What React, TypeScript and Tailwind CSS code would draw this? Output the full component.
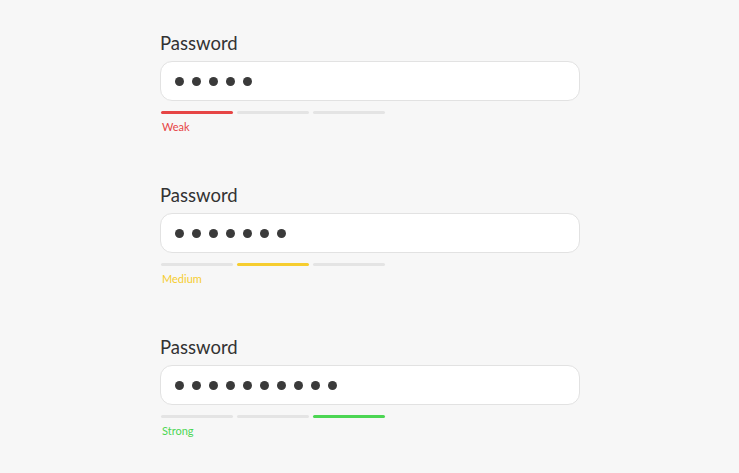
import React from 'react';

type Strength = 'weak' | 'medium' | 'strong';

const fields: { dots: number; strength: Strength; label: string }[] = [
  { dots: 5, strength: 'weak', label: 'Weak' },
  { dots: 7, strength: 'medium', label: 'Medium' },
  { dots: 10, strength: 'strong', label: 'Strong' },
];

function Meter({ strength }: { strength: Strength }) {
  const active = strength === 'weak' ? 0 : strength === 'medium' ? 1 : 2;
  const color =
    strength === 'weak' ? 'bg-[#e64545]' : strength === 'medium' ? 'bg-[#f6cd2f]' : 'bg-[#4cd653]';
  return (
    <div className="mt-[10px] flex gap-[4px] pl-px">
      {[0, 1, 2].map((i) => (
        <div
          key={i}
          className={`h-[3px] w-[72px] rounded-full ${i === active ? color : 'bg-[#e4e4e4]'}`}
        />
      ))}
    </div>
  );
}

function PasswordField({ dots, strength, label }: { dots: number; strength: Strength; label: string }) {
  const textColor =
    strength === 'weak' ? 'text-[#e64545]' : strength === 'medium' ? 'text-[#f6cd2f]' : 'text-[#4cd653]';
  return (
    <div className="w-[420px]">
      <div className="text-[18.5px] leading-[24px] text-[#333]">Password</div>
      <div className="mt-[6px] flex h-[40px] items-center gap-[8px] rounded-[12px] border border-[#e2e2e2] bg-white pl-[14px]">
        {Array.from({ length: dots }).map((_, i) => (
          <span key={i} className="h-[9px] w-[9px] rounded-full bg-[#3a3a3a]" />
        ))}
      </div>
      <Meter strength={strength} />
      <div className={`mt-[6px] pl-[2px] text-[11px] leading-[14px] ${textColor}`}>{label}</div>
    </div>
  );
}

export default function App() {
  return (
    <div
      className="flex h-[473px] w-[739px] flex-col gap-[49px] bg-[#f7f7f7] pl-[160px] pt-[31px]"
      style={{ fontFamily: 'Lato, "Open Sans", sans-serif' }}
    >
      {fields.map((f) => (
        <PasswordField key={f.label} {...f} />
      ))}
    </div>
  );
}
